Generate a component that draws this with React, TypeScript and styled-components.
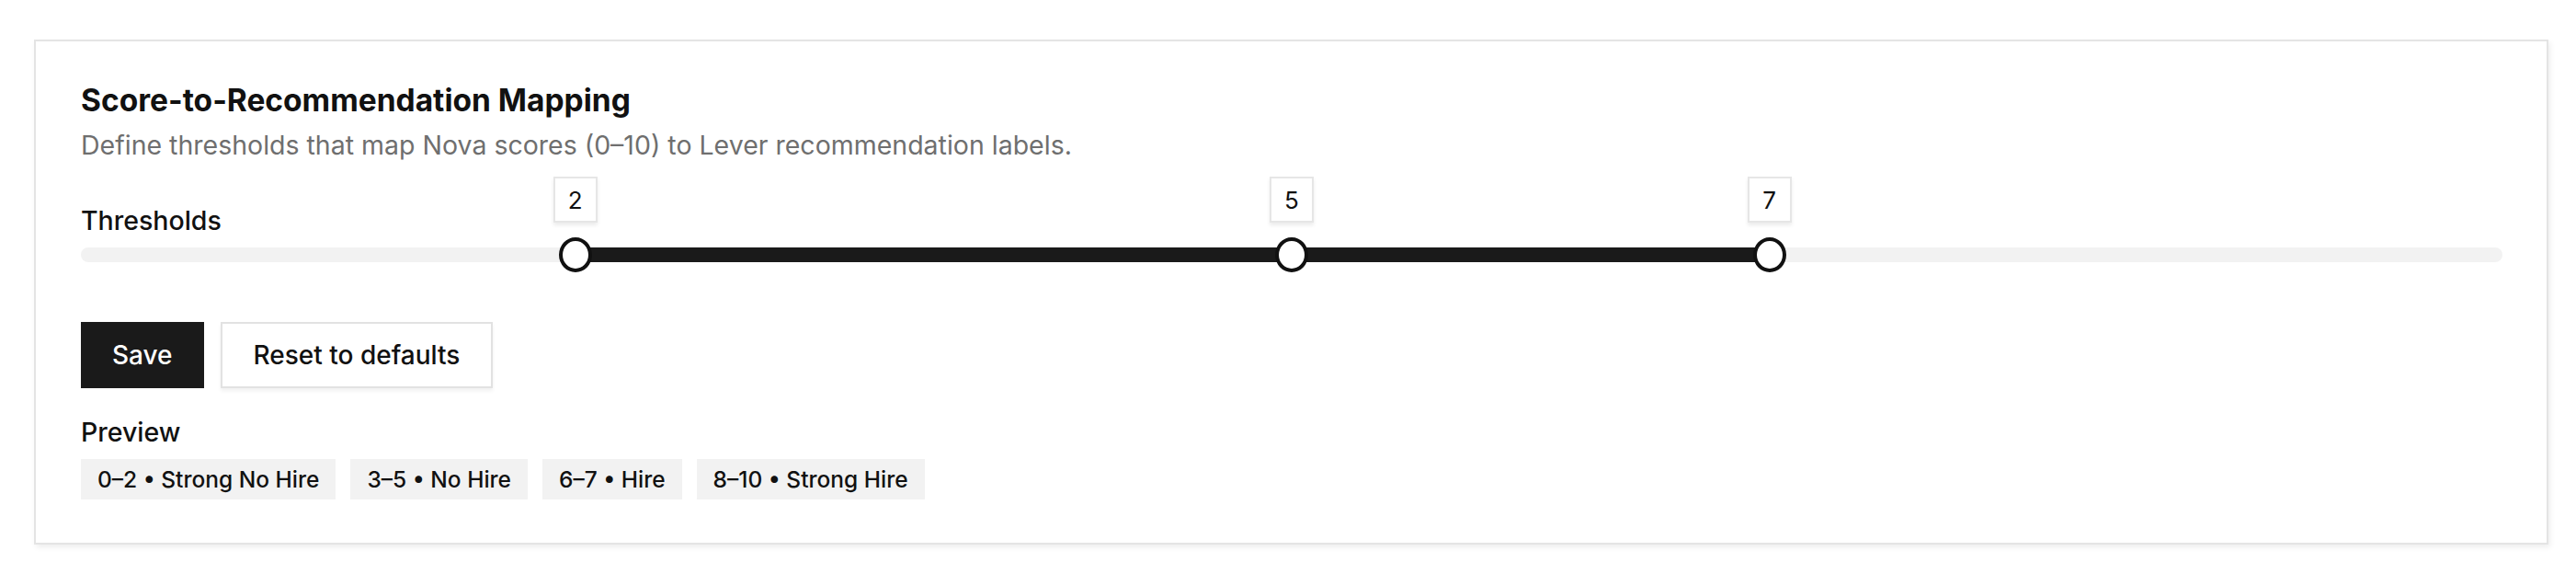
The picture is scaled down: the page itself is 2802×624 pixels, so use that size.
import React from 'react';
import styled, { createGlobalStyle } from 'styled-components';

const GlobalStyle = createGlobalStyle`
  html, body {
    margin: 0;
    padding: 0;
    background: #ffffff;
  }
  body {
    font-family: Inter, "Noto Sans", "Liberation Sans", sans-serif;
    color: #111111;
  }
`;

const Page = styled.div`
  padding: 43px 30px 34px 37px;
  box-sizing: border-box;
`;

const Card = styled.section`
  background: #ffffff;
  border: 2px solid #e4e4e4;
  box-shadow: 2px 3px 6px rgba(0, 0, 0, 0.07);
  padding: 45px 48px 47px 49px;
  box-sizing: border-box;
`;

const Title = styled.h2`
  margin: 0;
  font-size: 33.5px;
  line-height: 38px;
  font-weight: 700;
  color: #111111;
`;

const Subtitle = styled.p`
  margin: 10px 0 0;
  font-size: 28.5px;
  line-height: 39px;
  font-weight: 400;
  color: #6f6f6f;
`;

const Label = styled.div<{ $gap?: number }>`
  margin-top: ${(p) => p.$gap ?? 0}px;
  font-size: 28.5px;
  line-height: 39px;
  font-weight: 500;
  color: #111111;
`;

const SliderRoot = styled.div`
  position: relative;
  height: 36px;
  display: flex;
  align-items: center;
`;

const Track = styled.div`
  position: relative;
  flex: 1;
  height: 16px;
  border-radius: 8px;
  background: #f2f2f2;
`;

const Range = styled.div`
  position: absolute;
  top: 0;
  bottom: 0;
  background: #1a1a1a;
`;

const Thumb = styled.div`
  position: absolute;
  top: 50%;
  width: 36px;
  height: 38px;
  margin-left: -18px;
  margin-top: -19px;
  box-sizing: border-box;
  border: 4.5px solid #111111;
  border-radius: 50%;
  background: #ffffff;
`;

const ValueTip = styled.div`
  position: absolute;
  bottom: 50px;
  left: 50%;
  transform: translateX(-50%);
  width: 48px;
  height: 50px;
  box-sizing: border-box;
  display: flex;
  align-items: center;
  justify-content: center;
  background: #ffffff;
  border: 2px solid #e6e6e6;
  box-shadow: 0 3px 4px rgba(0, 0, 0, 0.08);
  font-size: 26px;
  font-weight: 400;
  color: #111111;
`;

const Actions = styled.div`
  display: flex;
  gap: 18px;
  margin-top: 55px;
`;

const Button = styled.button<{ $primary?: boolean }>`
  height: 72px;
  padding: 0 ${(p) => (p.$primary ? 32 : 34)}px;
  box-sizing: border-box;
  font-family: inherit;
  font-size: 28px;
  font-weight: 500;
  cursor: pointer;
  border: 2px solid ${(p) => (p.$primary ? '#1a1a1a' : '#e2e2e2')};
  background: ${(p) => (p.$primary ? '#1a1a1a' : '#ffffff')};
  color: ${(p) => (p.$primary ? '#ffffff' : '#111111')};
  box-shadow: ${(p) => (p.$primary ? 'none' : '0 3px 4px rgba(0, 0, 0, 0.06)')};
`;

const Chips = styled.div`
  display: flex;
  gap: 16px;
  margin-top: 10px;
`;

const Chip = styled.span`
  display: inline-flex;
  align-items: center;
  height: 44px;
  padding: 0 18px;
  background: #f2f2f2;
  font-size: 24.5px;
  font-weight: 500;
  color: #111111;
`;

const THUMB = 36;
const thresholds = [2, 5, 7];
const preview = ['0–2 • Strong No Hire', '3–5 • No Hire', '6–7 • Hire', '8–10 • Strong Hire'];

const pos = (v: number) => `calc(${THUMB / 2}px + (100% - ${THUMB}px) * ${v / 10})`;

export default function App() {
  const lo = thresholds[0];
  const hi = thresholds[thresholds.length - 1];
  return (
    <>
      <GlobalStyle />
      <Page>
        <Card>
          <Title>Score-to-Recommendation Mapping</Title>
          <Subtitle>Define thresholds that map Nova scores (0–10) to Lever recommendation labels.</Subtitle>
          <Label $gap={43}>Thresholds</Label>
          <SliderRoot>
            <Track>
              <Range style={{ left: pos(lo), width: `calc((100% - ${THUMB}px) * ${(hi - lo) / 10})` }} />
              {thresholds.map((t) => (
                <Thumb key={t} style={{ left: pos(t) }}>
                  <ValueTip>{t}</ValueTip>
                </Thumb>
              ))}
            </Track>
          </SliderRoot>
          <Actions>
            <Button $primary>Save</Button>
            <Button>Reset to defaults</Button>
          </Actions>
          <Label $gap={28}>Preview</Label>
          <Chips>
            {preview.map((p) => (
              <Chip key={p}>{p}</Chip>
            ))}
          </Chips>
        </Card>
      </Page>
    </>
  );
}
